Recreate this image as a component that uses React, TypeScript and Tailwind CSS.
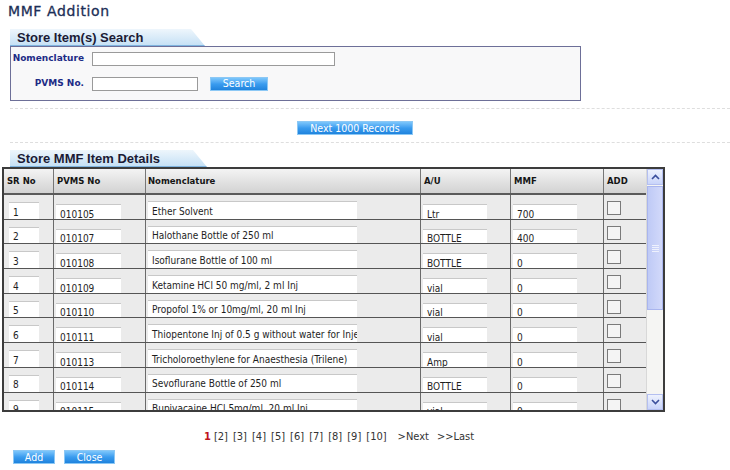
const rows = [
  { sr: '1', pvms: '010105', name: 'Ether Solvent', au: 'Ltr', mmf: '700' },
  { sr: '2', pvms: '010107', name: 'Halothane Bottle of 250 ml', au: 'BOTTLE', mmf: '400' },
  { sr: '3', pvms: '010108', name: 'Isoflurane Bottle of 100 ml', au: 'BOTTLE', mmf: '0' },
  { sr: '4', pvms: '010109', name: 'Ketamine HCl 50 mg/ml, 2 ml Inj', au: 'vial', mmf: '0' },
  { sr: '5', pvms: '010110', name: 'Propofol 1% or 10mg/ml, 20 ml Inj', au: 'vial', mmf: '0' },
  { sr: '6', pvms: '010111', name: 'Thiopentone Inj of 0.5 g without water for Injection', au: 'vial', mmf: '0' },
  { sr: '7', pvms: '010113', name: 'Tricholoroethylene for Anaesthesia (Trilene)', au: 'Amp', mmf: '0' },
  { sr: '8', pvms: '010114', name: 'Sevoflurane Bottle of 250 ml', au: 'BOTTLE', mmf: '0' },
  { sr: '9', pvms: '010115', name: 'Bupivacaine HCl 5mg/ml, 20 ml Inj', au: 'vial', mmf: '0' },
]

const body = "font-['DejaVu_Sans_Condensed','DejaVu_Sans',sans-serif]"

function Tab({ label, width }: { label: string; width: string }) {
  return (
    <div className={`${width} h-[17px] flex items-center pl-[7px] bg-gradient-to-b from-[#eef6fc] to-[#c6e1f5] border-b border-[#7fb4df] [clip-path:polygon(0_0,calc(100%-14px)_0,100%_100%,0_100%)]`}>
      <span className="font-['Liberation_Sans',sans-serif] font-bold text-[13px] text-[#1b1b35] leading-none">{label}</span>
    </div>
  )
}

function BlueButton({ label, w }: { label: string; w: string }) {
  return (
    <div className={`${w} h-[14px] flex items-center justify-center bg-gradient-to-b from-[#7cc6fb] via-[#3a9cef] to-[#1f83dd] border border-[#8cc8f5] text-white text-[10.5px] leading-none ${body}`}>
      {label}
    </div>
  )
}

function Field({ text, w, pt }: { text: string; w: string; pt: string }) {
  return (
    <div className={`${pt} h-full`}>
      <div className={`${w} h-[19px] bg-white border-t border-[#c8c8c8] flex items-center pl-[4px] overflow-hidden whitespace-nowrap text-[10px] text-[#1e1e1e] ${body}`}>
        {text}
      </div>
    </div>
  )
}

export default function App() {
  return (
    <div className="w-[730px] h-[470px] bg-white overflow-hidden relative">
      {/* Title */}
      <div className="h-[29px] pl-[8px] pt-[1px] font-['DejaVu_Sans',sans-serif] text-[14px] tracking-[0.6px] text-[#1c2f57] [-webkit-text-stroke:0.3px_#1c2f57]">
        MMF Addition
      </div>

      {/* Search section */}
      <div className="ml-[10px] w-[571px]">
        <Tab label="Store Item(s) Search" width="w-[195px]" />
        <div className="h-[55px] border border-[#6d6f98] bg-[#f8f8f9] pt-[4px]">
          <div className="flex items-center h-[15px]">
            <div className="w-[73px] text-right font-['DejaVu_Sans',sans-serif] font-bold text-[9px] text-[#1d2b86]">Nomenclature</div>
            <div className="ml-[8px] w-[243px] h-[14px] bg-white border border-[#9a9a9a]" />
          </div>
          <div className="flex items-center h-[15px] mt-[10px]">
            <div className="w-[73px] text-right font-['DejaVu_Sans',sans-serif] font-bold text-[9px] text-[#1d2b86]">PVMS No.</div>
            <div className="ml-[8px] w-[106px] h-[14px] bg-white border border-[#9a9a9a]" />
            <div className="ml-[12px]">
              <BlueButton label="Search" w="w-[58px]" />
            </div>
          </div>
        </div>
      </div>

      <div className="ml-[10px] mt-[7px] border-t border-dashed border-[#dedede]" />
      <div className="flex pl-[297px] pt-[12px] h-[33px]">
        <BlueButton label="Next 1000 Records" w="w-[116px]" />
      </div>
      <div className="ml-[10px] border-t border-dashed border-[#dedede]" />

      {/* Item details */}
      <div className="ml-[10px] mt-[7px]">
        <Tab label="Store MMF Item Details" width="w-[197px]" />
      </div>
      <div className="ml-[2px] w-[663px] h-[245px] border-2 border-[#3c3c3c] flex overflow-hidden">
        <div className="w-[642px] h-full overflow-hidden bg-[#ebebeb]">
          {/* Header */}
          <div className="flex h-[26px] bg-gradient-to-b from-[#f4f4f4] to-[#d2d2d2] border-b-2 border-[#5a5a5a] font-['DejaVu_Sans',sans-serif] font-bold text-[8.5px] text-[#151515]">
            <div className="w-[50px] pl-[3px] flex items-center border-r border-[#777]">SR No</div>
            <div className="w-[92px] pl-[3px] flex items-center border-r border-[#777]">PVMS No</div>
            <div className="w-[275px] pl-[2px] flex items-center border-r border-[#777]">Nomenclature</div>
            <div className="w-[90px] pl-[3px] flex items-center border-r border-[#777]">A/U</div>
            <div className="w-[93px] pl-[3px] flex items-center border-r border-[#777]">MMF</div>
            <div className="w-[42px] pl-[3px] flex items-center">ADD</div>
          </div>
          {rows.map((r) => (
            <div key={r.sr} className="flex h-[24.7px] border-b border-[#555] overflow-hidden">
              <div className="w-[50px] pl-[5px] border-r border-[#6a6a6a] overflow-hidden">
                <Field text={r.sr} w="w-[30px]" pt="pt-[7px]" />
              </div>
              <div className="w-[92px] pl-[2px] border-r border-[#6a6a6a] overflow-hidden">
                <Field text={r.pvms} w="w-[65px]" pt="pt-[9px]" />
              </div>
              <div className="w-[275px] pl-[2px] border-r border-[#6a6a6a] overflow-hidden">
                <Field text={r.name} w="w-[209px]" pt="pt-[6px]" />
              </div>
              <div className="w-[90px] pl-[2px] border-r border-[#6a6a6a] overflow-hidden">
                <Field text={r.au} w="w-[64px]" pt="pt-[9px]" />
              </div>
              <div className="w-[93px] pl-[2px] border-r border-[#6a6a6a] overflow-hidden">
                <Field text={r.mmf} w="w-[64px]" pt="pt-[9px]" />
              </div>
              <div className="w-[42px] pl-[3px] pt-[6px]">
                <div className="w-[14px] h-[14px] border border-[#7a7a7a] bg-[#f4f4f4]" />
              </div>
            </div>
          ))}
        </div>

        {/* Scrollbar */}
        <div className="w-[17px] h-full bg-[#f5f5f3] border-l border-[#d8d8d8] flex flex-col">
          <div className="h-[16px] flex items-center justify-center bg-gradient-to-b from-[#eef2fd] to-[#c9d4fa] border border-[#b4bff0]">
            <svg width="9" height="6" viewBox="0 0 9 6"><path d="M1 5 L4.5 1.5 L8 5" stroke="#3b4f9c" strokeWidth="1.6" fill="none" /></svg>
          </div>
          <div className="h-[124px] mt-[1px] bg-gradient-to-r from-[#bfcaf6] to-[#d2d9fa] border border-[#a9b5ee] flex flex-col items-center justify-center gap-[1px]">
            <div className="w-[7px] h-px bg-[#eef1fd]" />
            <div className="w-[7px] h-px bg-[#eef1fd]" />
            <div className="w-[7px] h-px bg-[#eef1fd]" />
            <div className="w-[7px] h-px bg-[#eef1fd]" />
          </div>
          <div className="flex-1" />
          <div className="h-[16px] flex items-center justify-center bg-gradient-to-b from-[#eef2fd] to-[#c9d4fa] border border-[#b4bff0]">
            <svg width="9" height="6" viewBox="0 0 9 6"><path d="M1 1 L4.5 4.5 L8 1" stroke="#3b4f9c" strokeWidth="1.6" fill="none" /></svg>
          </div>
        </div>
      </div>

      {/* Pagination */}
      <div className={`flex items-center pl-[204px] mt-[18px] h-[14px] text-[11px] text-[#333] ${body}`}>
        <span className="text-[#c0141c] font-bold mr-[3px]">1</span>
        <div className="flex gap-[5px]">
          {['2', '3', '4', '5', '6', '7', '8', '9', '10'].map((n) => (
            <span key={n}>[{n}]</span>
          ))}
        </div>
        <span className="ml-[11px]">&gt;Next</span>
        <span className="ml-[8px]">&gt;&gt;Last</span>
      </div>

      <div className="flex gap-[9px] pl-[13px] mt-[6px]">
        <BlueButton label="Add" w="w-[42px]" />
        <BlueButton label="Close" w="w-[51px]" />
      </div>
    </div>
  )
}
